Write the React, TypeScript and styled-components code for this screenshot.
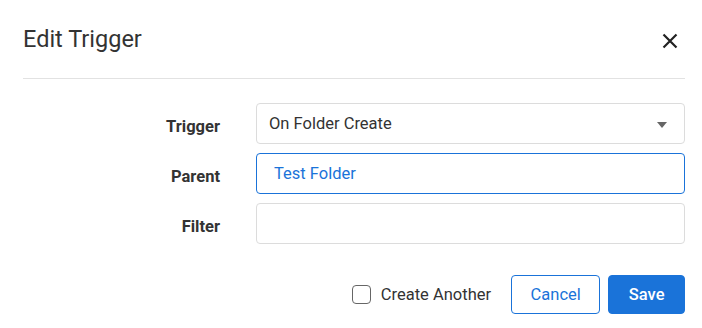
import React, { useState } from 'react';
import styled, { createGlobalStyle } from 'styled-components';

const GlobalStyle = createGlobalStyle`
  html, body {
    margin: 0;
    padding: 0;
    background: #ffffff;
  }
  body {
    font-family: Roboto, "Liberation Sans", Arial, sans-serif;
  }
`;

const Dialog = styled.div`
  width: 702px;
  height: 328px;
  box-sizing: border-box;
  padding: 0 17px 0 23px;
  background: #ffffff;
  display: flex;
  flex-direction: column;
`;

const Header = styled.div`
  height: 79px;
  display: flex;
  align-items: center;
  justify-content: space-between;
  border-bottom: 1px solid #e2e2e2;
  box-sizing: border-box;
  padding-bottom: 1px;
`;

const Title = styled.h2`
  margin: 0;
  font-size: 23.5px;
  font-weight: 400;
  color: #333333;
`;

const CloseButton = styled.button`
  background: none;
  border: none;
  padding: 0;
  margin: 4px 6px 0 0;
  width: 18px;
  height: 18px;
  display: flex;
  align-items: center;
  justify-content: center;
  cursor: pointer;
  color: #222222;
`;

const Form = styled.div`
  display: grid;
  grid-template-columns: 197px 1fr;
  column-gap: 36px;
  row-gap: 9px;
  align-items: center;
  margin-top: 24px;
`;

const Label = styled.label`
  text-align: right;
  font-size: 16.5px;
  font-weight: 700;
  color: #333333;
  padding-top: 5px;
`;

const Field = styled.div<{ $focused?: boolean }>`
  position: relative;
  height: 41px;
  box-sizing: border-box;
  border: 1px solid ${p => (p.$focused ? '#1a73d9' : '#dcdcdc')};
  border-radius: 4px;
  display: flex;
  align-items: center;
  padding: 0 ${p => (p.$focused ? '17px' : '12px')};
  font-size: 16.5px;
  color: ${p => (p.$focused ? '#1a73d9' : '#333333')};
`;

const Caret = styled.span`
  position: absolute;
  right: 17px;
  top: 18px;
  width: 0;
  height: 0;
  border-left: 5.5px solid transparent;
  border-right: 5.5px solid transparent;
  border-top: 6px solid #666666;
`;

const Footer = styled.div`
  display: flex;
  justify-content: flex-end;
  align-items: center;
  gap: 8px;
  margin-top: 31px;
`;

const CheckLabel = styled.label`
  display: flex;
  align-items: center;
  gap: 10px;
  font-size: 16.5px;
  color: #333333;
  margin-right: 12px;
  cursor: pointer;
`;

const CheckBox = styled.span<{ $checked: boolean }>`
  width: 19px;
  height: 19px;
  box-sizing: border-box;
  border: 1.5px solid #666666;
  border-radius: 4px;
  background: ${p => (p.$checked ? '#1a73d9' : '#ffffff')};
`;

const Button = styled.button<{ $variant: 'primary' | 'outline' }>`
  height: 39px;
  box-sizing: border-box;
  border-radius: 4px;
  font-family: inherit;
  font-size: 16.5px;
  padding: 0 ${p => (p.$variant === 'primary' ? '19.5px' : '18.5px')};
  border: 1px solid #1a73d9;
  background: ${p => (p.$variant === 'primary' ? '#1a73d9' : '#ffffff')};
  color: ${p => (p.$variant === 'primary' ? '#ffffff' : '#1a73d9')};
  font-weight: ${p => (p.$variant === 'primary' ? 500 : 400)};
  cursor: pointer;
`;

export default function App() {
  const [another, setAnother] = useState(false);

  return (
    <>
      <GlobalStyle />
      <Dialog>
        <Header>
          <Title>Edit Trigger</Title>
          <CloseButton aria-label="Close">
            <svg width="16" height="16" viewBox="0 0 16 16">
              <path d="M1.5 1.5 L14.5 14.5 M14.5 1.5 L1.5 14.5" stroke="currentColor" strokeWidth="2.2" />
            </svg>
          </CloseButton>
        </Header>

        <Form>
          <Label>Trigger</Label>
          <Field>
            On Folder Create
            <Caret />
          </Field>

          <Label>Parent</Label>
          <Field $focused>Test Folder</Field>

          <Label>Filter</Label>
          <Field />
        </Form>

        <Footer>
          <CheckLabel onClick={() => setAnother(!another)}>
            <CheckBox $checked={another} />
            Create Another
          </CheckLabel>
          <Button $variant="outline">Cancel</Button>
          <Button $variant="primary">Save</Button>
        </Footer>
      </Dialog>
    </>
  );
}
